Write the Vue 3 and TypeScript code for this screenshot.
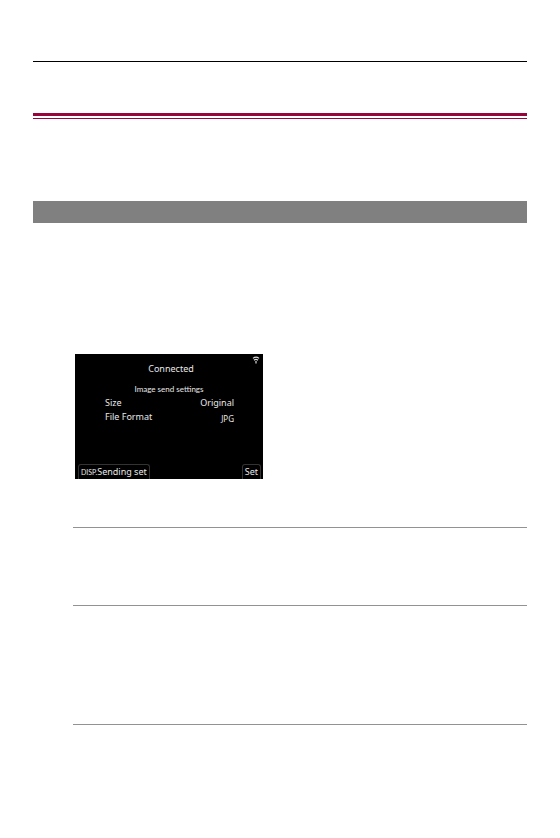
<script setup lang="ts">
interface Setting {
  label: string
  value: string
  compact?: boolean
}

const settings: Setting[] = [
  { label: 'Size', value: 'Original' },
  { label: 'File Format', value: 'JPG', compact: true },
]
</script>

<template>
  <main class="page">
    <hr class="rule header-rule" />
    <div class="title-rule"></div>
    <div class="section-bar"></div>
    <section class="content">
      <div class="screen">
        <svg class="wifi" viewBox="0 0 8 8" width="8" height="8" aria-hidden="true">
          <path d="M1 2.4Q4 0 7 2.4" />
          <path d="M2 4.2Q4 2.6 6 4.2" />
          <path d="M4 5V7.4" />
        </svg>
        <h1 class="status">Connected</h1>
        <h2 class="caption">Image send settings</h2>
        <dl class="settings">
          <div v-for="item in settings" :key="item.label" class="setting">
            <dt>{{ item.label }}</dt>
            <dd :class="{ compact: item.compact }">{{ item.value }}</dd>
          </div>
        </dl>
        <div class="actions">
          <button type="button" class="action"><span class="key">DISP.</span>Sending set</button>
          <button type="button" class="action">Set</button>
        </div>
      </div>
      <hr class="rule first" />
      <hr class="rule second" />
      <hr class="rule third" />
    </section>
  </main>
</template>

<style>
body {
  margin: 0;
  background: #fff;
}
</style>

<style scoped>
.page {
  display: flow-root;
  padding: 0 33px 113px;
  font-family: "Noto Sans", sans-serif;
}

.rule {
  height: 1px;
  margin: 0;
  border: 0;
  background: #929292;
}

.header-rule {
  margin-top: 61px;
  background: #000;
}

.title-rule {
  height: 2px;
  margin-top: 51px;
  border-top: 3px solid #98053e;
  border-bottom: 1px solid #98053e;
}

.section-bar {
  height: 22px;
  margin-top: 82px;
  background: #808080;
}

.content {
  padding-left: 40px;
}

.screen {
  position: relative;
  display: flex;
  flex-direction: column;
  box-sizing: border-box;
  width: 188px;
  min-height: 125px;
  margin: 131px 0 0 2px;
  padding-top: 8px;
  background: #000;
  color: #e8e8e8;
  font-size: 9px;
  line-height: 14px;
}

.wifi {
  position: absolute;
  top: 2px;
  right: 3px;
  fill: none;
  stroke: #ddd;
  stroke-width: 1.2;
}

.status,
.caption {
  margin: 0;
  font-size: 9px;
  font-weight: 400;
  text-align: center;
}

.status {
  padding-left: 4px;
}

.caption {
  margin-top: 6px;
  font-family: Lato, sans-serif;
  font-size: 8px;
}

.settings {
  margin: 0 29px 0 30px;
}

.setting {
  display: flex;
  justify-content: space-between;
}

.setting dd {
  margin: 0;
}

.setting .compact {
  padding-top: 2px;
  font-size: 8px;
}

.actions {
  display: flex;
  justify-content: space-between;
  margin-top: auto;
  padding: 0 2px 0 3px;
}

.action {
  display: flex;
  align-items: center;
  height: 15px;
  padding: 0 2px;
  border: 1px solid #333;
  border-bottom: 0;
  border-radius: 3px 3px 0 0;
  background: #000;
  color: inherit;
  font: inherit;
  line-height: 14px;
}

.key {
  font-family: Lato, sans-serif;
  font-size: 7px;
}

.first {
  margin-top: 48px;
}

.second {
  margin-top: 77px;
}

.third {
  margin-top: 118px;
}
</style>
